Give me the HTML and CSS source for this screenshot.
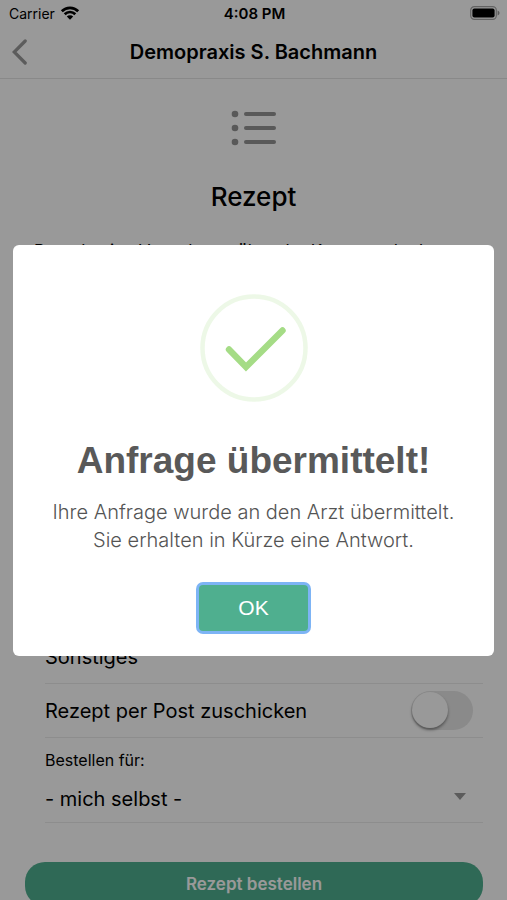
FILE: index.html
```html
<!DOCTYPE html>
<html lang="de">
<head>
<meta charset="utf-8">
<meta name="viewport" content="width=device-width, initial-scale=1">
<title>Rezept</title>
<link rel="stylesheet" href="styles.css">
</head>
<body>
<div class="status">
  <div class="carrier">
    <span>Carrier</span>
    <svg width="20" height="16" viewBox="0 0 20 16" aria-hidden="true">
      <path d="M1.8 6.2a11.6 11.6 0 0 1 16.4 0M4.7 9.2a7.5 7.5 0 0 1 10.6 0" fill="none" stroke="#000" stroke-width="2.7"/>
      <path d="M10 14.8 6.800 11.600a4.500 4.500 0 0 1 6.400 0z"/>
    </svg>
  </div>
  <time class="clock">4:08 PM</time>
  <svg class="battery" width="30" height="14" viewBox="0 0 30 14" aria-hidden="true">
    <rect x=".7" y=".7" width="25.6" height="12.6" rx="3.6" fill="none" stroke="#000" stroke-opacity=".35" stroke-width="1.2"/>
    <rect x="2.4" y="2.4" width="22.2" height="9.2" rx="2"/>
    <path d="M27.6 4.6v4.8c1.2-.5 1.9-1.4 1.9-2.4s-.7-1.9-1.9-2.4z" fill-opacity=".4"/>
  </svg>
</div>
<header class="navbar">
  <button class="back" type="button" aria-label="Zurück">
    <svg width="16" height="26" viewBox="0 0 16 26" aria-hidden="true"><path d="M13.2 2 2.2 13l11 11" fill="none" stroke="#999" stroke-width="3.2" stroke-linecap="round" stroke-linejoin="miter"/></svg>
  </button>
  <h1>Demopraxis S. Bachmann</h1>
</header>
<main>
  <section class="intro">
    <svg width="46" height="38" viewBox="0 0 46 38" fill="#949494" aria-hidden="true">
      <circle cx="4" cy="5" r="3.3"/><circle cx="4" cy="19" r="3.3"/><circle cx="4" cy="33" r="3.3"/>
      <rect x="13" y="3" width="32" height="4" rx="2"/><rect x="13" y="17" width="32" height="4" rx="2"/><rect x="13" y="31" width="32" height="4" rx="2"/>
    </svg>
    <h2>Rezept</h2>
    <p>Beende eine Verordnung über der Kamera oder h</p>
  </section>
  <form>
    <div class="row">Sonstiges</div>
    <div class="row">
      <label for="post">Rezept per Post zuschicken</label>
      <input class="toggle" id="post" type="checkbox" role="switch">
    </div>
    <div class="field">
      <label for="person">Bestellen für:</label>
      <div class="picker">
        <select id="person"><option>- mich selbst -</option></select>
        <svg width="12" height="7" viewBox="0 0 12 7" aria-hidden="true"><path d="M0 0h12L6 7z" fill="#999"/></svg>
      </div>
    </div>
    <button class="order" type="button">Rezept bestellen</button>
  </form>
</main>
<div class="overlay">
  <div class="dialog" role="alertdialog" aria-modal="true" aria-labelledby="dialog-title" aria-describedby="dialog-text">
    <svg width="108" height="108" viewBox="0 0 108 108" fill="none" aria-hidden="true">
      <circle cx="54" cy="54" r="51.5" stroke="#a5dc86" stroke-opacity=".2" stroke-width="4.5"/>
      <path d="M29 55.500 46 73 82.500 36.500" stroke="#a5dc86" stroke-width="6.400" stroke-linecap="round" stroke-linejoin="miter"/>
    </svg>
    <h2 id="dialog-title">Anfrage übermittelt!</h2>
    <p id="dialog-text">Ihre Anfrage wurde an den Arzt übermittelt. Sie erhalten in Kürze eine Antwort.</p>
    <button class="confirm" type="button">OK</button>
  </div>
</div>
</body>
</html>
```
FILE: styles.css
```css
* {
  box-sizing: border-box;
}

body {
  margin: 0;
  height: 100vh;
  overflow: hidden;
  background: #fff;
  color: #000;
  font-family: Inter, "Liberation Sans", sans-serif;
  font-size: 20px;
}

h1, h2, p {
  margin: 0;
}

button, select {
  font: inherit;
  color: inherit;
  border: 0;
}

.status {
  display: grid;
  grid-template-columns: 1fr auto 1fr;
  align-items: center;
  height: 26px;
  padding: 0 7px 0 9px;
  font-size: 14px;
}

.carrier {
  display: flex;
  align-items: center;
  gap: 5px;
}

.clock {
  font-size: 15px;
  font-weight: 600;
}

.battery {
  justify-self: end;
}

.navbar {
  display: grid;
  grid-template-columns: 40px 1fr 40px;
  align-items: center;
  height: 53px;
  border-bottom: 1px solid #e4e4e4;
}

.navbar h1 {
  text-align: center;
  font-size: 20px;
  font-weight: 600;
}

.back {
  display: flex;
  padding: 0 0 0 12px;
  background: none;
}

.intro {
  display: flex;
  flex-direction: column;
  align-items: center;
  min-height: 551px;
  padding: 30px 34px 0;
}

.intro h2 {
  margin-top: 32px;
  font-size: 26px;
  font-weight: 500;
  line-height: 36px;
}

.intro p {
  align-self: stretch;
  margin-top: 24px;
  font-size: 17px;
  line-height: 24px;
}

form {
  padding: 0 24px 0 25px;
}

.row, .field {
  margin-left: 20px;
  border-bottom: 1px solid #ececec;
}

.row {
  display: flex;
  align-items: center;
  justify-content: space-between;
  height: 54px;
  padding-right: 10px;
}

.toggle {
  appearance: none;
  display: flex;
  width: 62px;
  height: 39px;
  margin: 0;
  padding: 1px;
  border-radius: 20px;
  background: #e6e6e6;
}

.toggle::before {
  content: "";
  width: 36px;
  height: 36px;
  border-radius: 50%;
  background: #fff;
  box-shadow: 0 2px 3px rgba(0, 0, 0, .4);
}

.field {
  height: 85px;
  padding-top: 10px;
}

.field label {
  display: block;
  font-size: 16px;
  line-height: 24px;
}

.picker {
  display: flex;
  align-items: center;
  margin-top: 12px;
  padding-right: 17px;
}

.picker select {
  appearance: none;
  flex: 1;
  height: 30px;
  padding: 0;
  background: none;
}

.picker svg {
  margin-bottom: 6px;
}

.order {
  width: 100%;
  height: 44px;
  margin-top: 39px;
  border-radius: 20px;
  background: #4faf8f;
  color: #fff;
  font-size: 17px;
  font-weight: 600;
}

.overlay {
  position: fixed;
  inset: 0;
  display: flex;
  align-items: center;
  justify-content: center;
  padding: 13px;
  background: rgba(0, 0, 0, .4);
}

.dialog {
  display: flex;
  flex-direction: column;
  align-items: center;
  width: 100%;
  max-width: 600px;
  padding: 49px 26px 25px;
  border-radius: 6px;
  background: #fff;
  font-family: "Liberation Sans", sans-serif;
  text-align: center;
}

.dialog h2 {
  margin-top: 35px;
  color: #595959;
  font-size: 37px;
  line-height: 48px;
}

.dialog p {
  max-width: 420px;
  margin-top: 13px;
  color: #545454;
  font-family: Inter, "Liberation Sans", sans-serif;
  font-size: 20px;
  font-weight: 300;
  line-height: 28px;
}

.confirm {
  width: 109px;
  height: 46px;
  margin-top: 31px;
  border-radius: 4px;
  background: #4faf8f;
  box-shadow: 0 0 0 3px #7db4f5;
  color: #fff;
  font-size: 21px;
}
```
